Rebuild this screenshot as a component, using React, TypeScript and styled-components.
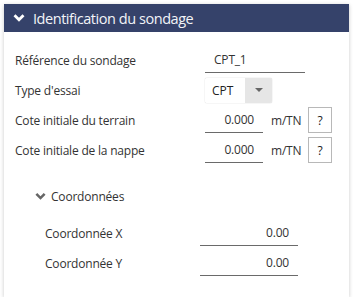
import React from 'react';
import styled, { createGlobalStyle } from 'styled-components';

const Global = createGlobalStyle`
    body {
        margin: 0;
        background: #ffffff;
        font-family: "Open Sans", "Noto Sans", sans-serif;
    }
`

const Card = styled.section`
    margin: 4px 0 0 4px;
    width: 345px;
    height: 293px;
    background: #fff;
    box-shadow: 0 1px 4px rgba(0, 0, 0, 0.22);
    display: flex;
    flex-direction: column;
`

const Header = styled.header`
    height: 28px;
    background: #35426a;
    color: #f2f4f8;
    display: flex;
    align-items: center;
    padding-left: 9px;
    gap: 8px;
    font-size: 14.5px;
    letter-spacing: -0.45px;
`

const Body = styled.div`
    padding: 15px 0 0 11px;
    display: flex;
    flex-direction: column;
    gap: 4px;
`

const Row = styled.div<{ $indent?: number }>`
    display: flex;
    align-items: center;
    height: 26px;
    padding-left: ${(p) => p.$indent ?? 0}px;
`

const Label = styled.span<{ $width: number }>`
    width: ${(p) => p.$width}px;
    flex: none;
    font-size: 12px;
    letter-spacing: -0.2px;
    color: #333;
`

const TextInput = styled.div<{ $width: number; $align?: string }>`
    width: ${(p) => p.$width}px;
    height: 25px;
    box-sizing: border-box;
    border-bottom: 1px solid #6a6a6a;
    display: flex;
    align-items: center;
    justify-content: ${(p) => (p.$align === 'right' ? 'flex-end' : 'flex-start')};
    padding: 0 9px;
    font-size: 12px;
    letter-spacing: -0.2px;
    color: #333;
`

const Select = styled.div`
    width: 67px;
    height: 25px;
    display: flex;
    border-radius: 2px;
    box-shadow: 0 0 1px rgba(0, 0, 0, 0.35);
    overflow: hidden;
`

const SelectValue = styled.span`
    flex: 1;
    display: flex;
    align-items: center;
    padding-left: 7px;
    font-size: 12px;
    color: #222;
    background: #fff;
`

const SelectArrow = styled.span`
    width: 27px;
    background: #e6e6e6;
    display: flex;
    align-items: center;
    justify-content: center;
    &::after {
        content: '';
        border-left: 4px solid transparent;
        border-right: 4px solid transparent;
        border-top: 4px solid #666;
    }
`

const Unit = styled.span`
    margin-left: 8px;
    width: 37px;
    font-size: 12px;
    letter-spacing: -0.2px;
    color: #333;
`

const HelpButton = styled.button`
    width: 24px;
    height: 26px;
    border: 1px solid #b8b8b8;
    background: #fff;
    font-family: inherit;
    font-size: 12px;
    color: #222;
    padding: 0;
`

const SubHeader = styled.div`
    display: flex;
    align-items: center;
    gap: 5px;
    margin: 21px 0 11px 20px;
    font-size: 12px;
    letter-spacing: -0.2px;
    color: #333;
`

const Chevron: React.FC<{ color: string; size: number }> = ({ color, size }) => (
    <svg width={size} height={size} viewBox="0 0 12 12">
        <path d="M1.5 3.2 L6 7.7 L10.5 3.2" fill="none" stroke={color} strokeWidth="2.8" />
    </svg>
)

const App: React.FC = () => (
    <>
        <Global />
        <Card>
            <Header>
                <Chevron color="#ffffff" size={12} />
                Identification du sondage
            </Header>
            <Body>
                <Row>
                    <Label $width={190}>Référence du sondage</Label>
                    <TextInput $width={100}>CPT_1</TextInput>
                </Row>
                <Row>
                    <Label $width={190}>Type d'essai</Label>
                    <Select>
                        <SelectValue>CPT</SelectValue>
                        <SelectArrow />
                    </Select>
                </Row>
                <Row>
                    <Label $width={190}>Cote initiale du terrain</Label>
                    <TextInput $width={58} $align="right">0.000</TextInput>
                    <Unit>m/TN</Unit>
                    <HelpButton>?</HelpButton>
                </Row>
                <Row>
                    <Label $width={190}>Cote initiale de la nappe</Label>
                    <TextInput $width={58} $align="right">0.000</TextInput>
                    <Unit>m/TN</Unit>
                    <HelpButton>?</HelpButton>
                </Row>
                <SubHeader>
                    <Chevron color="#666" size={11} />
                    Coordonnées
                </SubHeader>
                <Row $indent={30}>
                    <Label $width={155}>Coordonnée X</Label>
                    <TextInput $width={98} $align="right">0.00</TextInput>
                </Row>
                <Row $indent={30}>
                    <Label $width={155}>Coordonnée Y</Label>
                    <TextInput $width={98} $align="right">0.00</TextInput>
                </Row>
            </Body>
        </Card>
    </>
);

export default App;
